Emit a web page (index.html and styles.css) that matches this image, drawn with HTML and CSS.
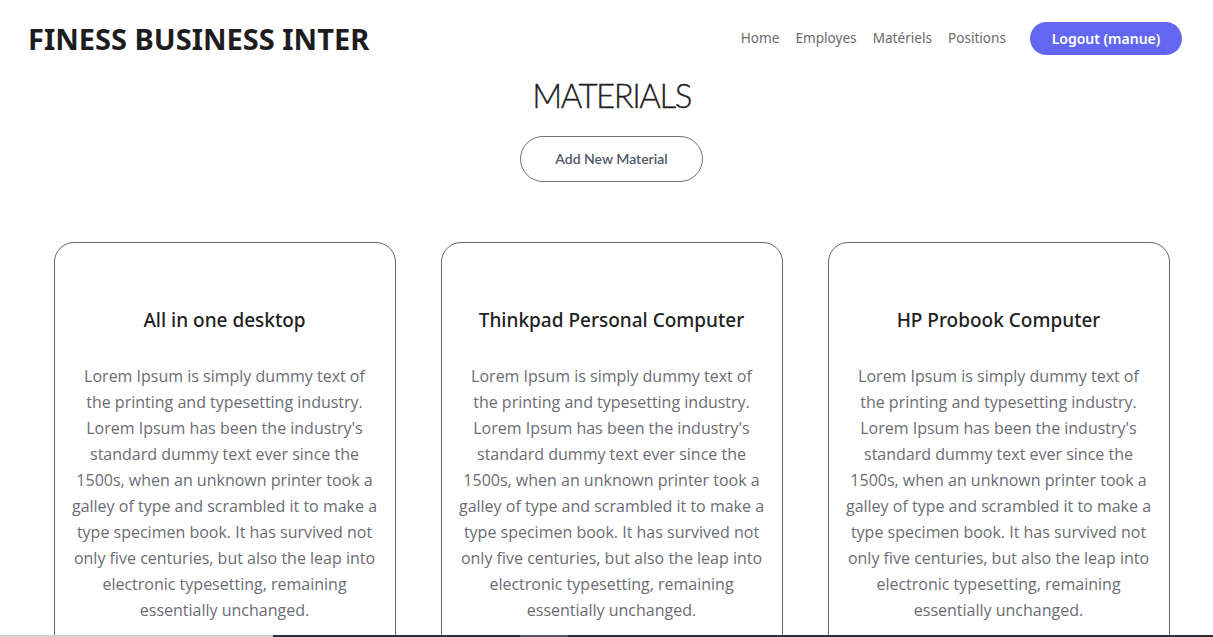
FILE: index.html
```html
<!DOCTYPE html>
<html lang="fr">
<head>
<meta charset="utf-8">
<title>Finess Business Inter - Materials</title>
<link rel="stylesheet" href="styles.css">
</head>
<body>
<header class="topbar">
  <div class="brand">FINESS BUSINESS INTER</div>
  <nav class="nav">
    <a class="nav-link" href="#">Home</a>
    <a class="nav-link" href="#">Employes</a>
    <a class="nav-link" href="#">Matériels</a>
    <a class="nav-link" href="#">Positions</a>
    <a class="logout" href="#">Logout (manue)</a>
  </nav>
</header>
<main class="main">
  <h1 class="page-title">MATERIALS</h1>
  <a class="add-btn" href="#">Add New Material</a>
  <section class="cards">
    <article class="card">
      <h3 class="card-title">All in one desktop</h3>
      <p class="card-text">Lorem Ipsum is simply dummy text of the printing and typesetting industry. Lorem Ipsum has been the industry's standard dummy text ever since the 1500s, when an unknown printer took a galley of type and scrambled it to make a type specimen book. It has survived not only five centuries, but also the leap into electronic typesetting, remaining essentially unchanged.</p>
    </article>
    <article class="card">
      <h3 class="card-title">Thinkpad Personal Computer</h3>
      <p class="card-text">Lorem Ipsum is simply dummy text of the printing and typesetting industry. Lorem Ipsum has been the industry's standard dummy text ever since the 1500s, when an unknown printer took a galley of type and scrambled it to make a type specimen book. It has survived not only five centuries, but also the leap into electronic typesetting, remaining essentially unchanged.</p>
    </article>
    <article class="card">
      <h3 class="card-title">HP Probook Computer</h3>
      <p class="card-text">Lorem Ipsum is simply dummy text of the printing and typesetting industry. Lorem Ipsum has been the industry's standard dummy text ever since the 1500s, when an unknown printer took a galley of type and scrambled it to make a type specimen book. It has survived not only five centuries, but also the leap into electronic typesetting, remaining essentially unchanged.</p>
    </article>
  </section>
</main>
<div class="taskbar">
  <span class="tb-light"></span>
  <span class="tb-dark"></span>
  <span class="tb-mid"></span>
  <span class="tb-dark2"></span>
</div>
</body>
</html>
```
FILE: styles.css
```css
* { box-sizing: border-box; }
html, body { margin: 0; padding: 0; background: #fff; }
body { font-family: "Noto Sans", "Open Sans", sans-serif; color: #212529; overflow: hidden; }
a { text-decoration: none; }

.topbar {
  display: flex;
  align-items: center;
  justify-content: space-between;
  padding: 21px 31px 0 28px;
  height: 56px;
}
.brand {
  font-family: "Noto Sans", sans-serif;
  font-weight: 700;
  font-size: 29px;
  color: #1d1d1f;
  line-height: 1;
}
.nav { display: flex; align-items: center; }
.nav-link {
  font-size: 13.6px;
  line-height: 18px;
  padding-bottom: 2px;
  color: #6b6b6b;
  margin-right: 16px;
}
.logout {
  margin-left: 8px;
  display: inline-flex;
  align-items: center;
  justify-content: center;
  width: 152px;
  height: 33px;
  border-radius: 17px;
  background: #6366f1;
  color: #fff;
  font-size: 14px;
  font-weight: 600;
  padding-bottom: 1px;
}

.main {
  display: flex;
  flex-direction: column;
  align-items: center;
  padding-left: 10px;
  padding-top: 1px;
}
.page-title {
  font-family: "Lato", sans-serif;
  font-weight: 300;
  font-size: 33px;
  letter-spacing: -1.5px;
  -webkit-text-stroke: 0.3px #222;
  color: #222;
  margin: 18px 0 1px 0;
  line-height: 40px;
}
.add-btn {
  margin-top: 20px;
  display: inline-flex;
  align-items: center;
  justify-content: center;
  width: 183px;
  height: 46px;
  border: 1px solid #6b6d7a;
  border-radius: 23px;
  font-family: "Lato", sans-serif;
  font-weight: 600;
  font-size: 14px;
  color: #525668;
  padding-bottom: 1px;
}

.cards {
  margin-top: 60px;
  display: grid;
  grid-template-columns: repeat(3, 342px);
  column-gap: 45px;
}
.card {
  border: 1px solid #62646f;
  border-radius: 20px;
  padding: 63px 17px 40px;
  text-align: center;
  min-height: 420px;
}
.card-title {
  font-family: "Noto Sans", sans-serif;
  font-weight: 500;
  font-size: 19px;
  line-height: 28px;
  color: #222;
  margin: 0 0 29px;
}
.card-text {
  font-family: "Open Sans", sans-serif;
  font-size: 16px;
  line-height: 26px;
  color: #6b6c74;
  margin: 0;
}

.taskbar {
  position: fixed;
  left: 0;
  right: 0;
  bottom: 0;
  height: 2px;
  display: flex;
}
.tb-light { width: 273px; background: #cfcfcf; }
.tb-dark { width: 247px; background: #2c3038; }
.tb-mid { width: 48px; background: #50535b; }
.tb-dark2 { flex: 1; background: #2c3038; }
```
